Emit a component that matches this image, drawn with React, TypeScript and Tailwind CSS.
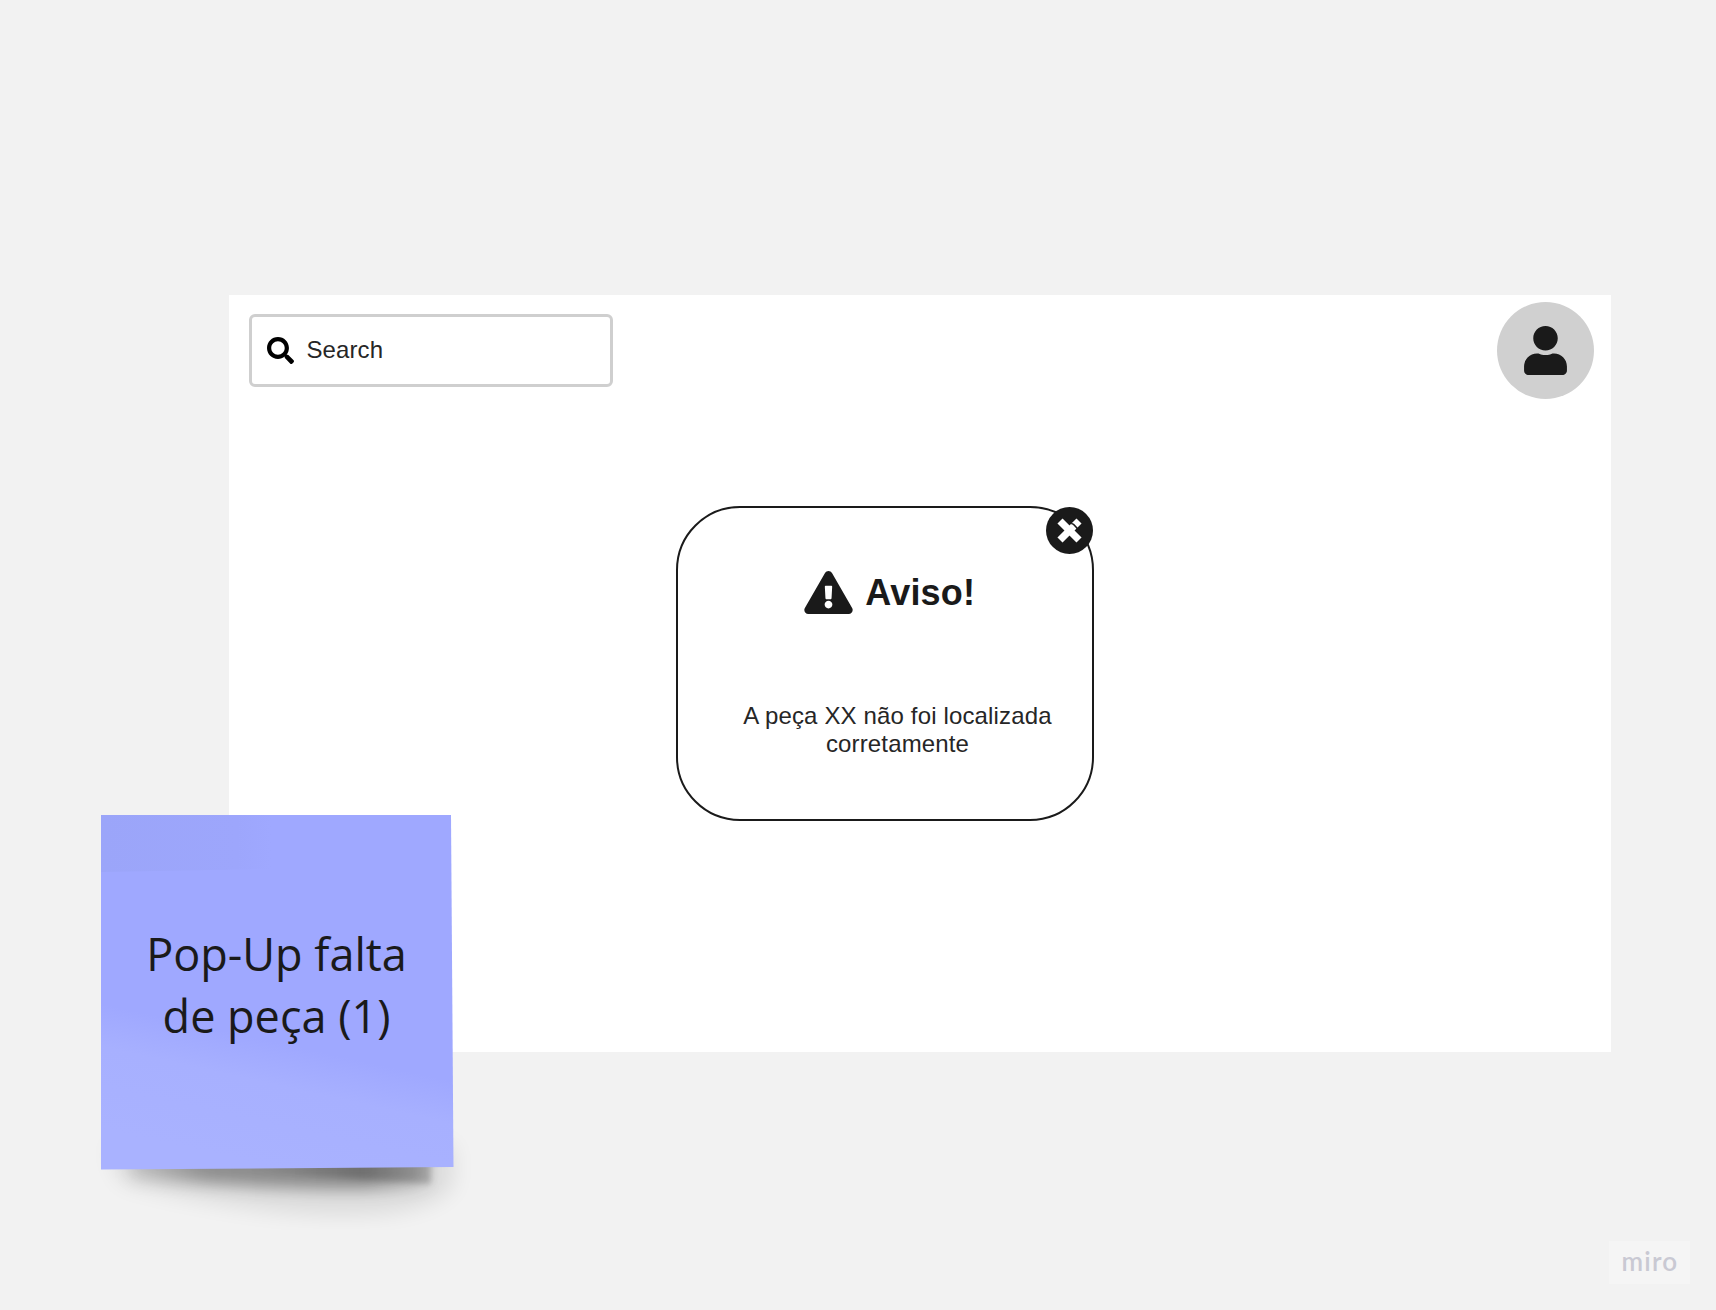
import { FaExclamationTriangle, FaSearch, FaUser } from "react-icons/fa";

function SearchBox() {
  return (
    <div className="mt-[19px] flex h-[73px] w-[364px] items-center rounded-[6px] border-[3px] border-[#cfcfcf] bg-white pl-[15px]">
      <FaSearch className="size-[27px] text-black" />
      <span className="-mt-[2px] ml-[12.5px] text-2xl leading-7 tracking-[0.1px] text-[#262626]">Search</span>
    </div>
  );
}

function Avatar() {
  return (
    <div className="mt-[7px] flex size-[97px] items-center justify-center rounded-full bg-[#d0d0d0]">
      <FaUser className="h-[49px] w-[43px] text-[#1a1a1a]" />
    </div>
  );
}

function CloseButton() {
  return (
    <svg viewBox="0 0 47 47" className="absolute -top-[1px] -right-[1px] size-[47px]">
      <circle cx="23.5" cy="23.5" r="23.5" fill="#1a1a1a" />
      <g stroke="#fff" strokeWidth="7.2">
        <path d="M14 14L33 33" />
        <path d="M14 33L33 14" />
      </g>
      <path d="M25.2 16.4L27.6 17.4L31.2 21.2L31 22.8" fill="none" stroke="#1a1a1a" strokeWidth="1.5" />
    </svg>
  );
}

function Dialog() {
  return (
    <div className="relative flex h-[315px] w-[418px] flex-col items-center rounded-[64px] border-2 border-[#1a1a1a] bg-white text-[#1a1a1a]">
      <CloseButton />
      <div className="mt-[62px] flex h-[44px] items-center pl-[9px]">
        <FaExclamationTriangle className="h-[43px] w-[49px]" />
        <h1 className="mt-[2px] ml-[12.5px] text-[36px] leading-[44px] font-bold tracking-[0.2px]">Aviso!</h1>
      </div>
      <p className="mt-[88px] ml-[25px] w-[330px] text-center text-2xl leading-7 tracking-[0.15px] text-[#262626]">
        A peça XX não foi localizada corretamente
      </p>
    </div>
  );
}

function StickyNote() {
  return (
    <div className="absolute top-[815px] left-[101px] flex h-[355px] w-[351px] items-center justify-center">
      <svg viewBox="0 0 393 435" className="absolute -top-[20px] -left-[20px] h-[435px] w-[393px] max-w-none">
        <defs>
          <linearGradient id="paper" gradientUnits="userSpaceOnUse" x1="222" y1="236" x2="192" y2="372">
            <stop offset="0" stopColor="#9fa8ff" />
            <stop offset="0.12" stopColor="#9fa8ff" />
            <stop offset="0.42" stopColor="#a7b0ff" />
            <stop offset="1" stopColor="#a9b2ff" />
          </linearGradient>
          <linearGradient id="shade" x1="0" y1="0" x2="1" y2="0">
            <stop offset="0" stopColor="#9ba5f9" />
            <stop offset="0.8" stopColor="#9da6fc" />
            <stop offset="1" stopColor="#9fa8ff" />
          </linearGradient>
          <linearGradient id="lift" x1="0" y1="0" x2="1" y2="0">
            <stop offset="0" stopColor="#000" stopOpacity="0.12" />
            <stop offset="0.25" stopColor="#000" stopOpacity="0.35" />
            <stop offset="0.8" stopColor="#000" stopOpacity="0.38" />
            <stop offset="1" stopColor="#000" stopOpacity="0.15" />
          </linearGradient>
          <linearGradient id="curl" x1="0" y1="0" x2="1" y2="0">
            <stop offset="0" stopColor="#000" stopOpacity="0" />
            <stop offset="0.6" stopColor="#000" stopOpacity="0.18" />
            <stop offset="1" stopColor="#000" stopOpacity="0.2" />
          </linearGradient>
          <filter id="near" x="-20%" y="-50%" width="140%" height="200%">
            <feGaussianBlur stdDeviation="8" />
          </filter>
          <filter id="far" x="-20%" y="-50%" width="140%" height="200%">
            <feGaussianBlur stdDeviation="11" />
          </filter>
          <filter id="edge" x="-20%" y="-50%" width="140%" height="200%">
            <feGaussianBlur stdDeviation="3" />
          </filter>
        </defs>
        <path d="M28 350H372V390C340 434 190 426 40 386Z" fill="#000" opacity="0.09" filter="url(#far)" />
        <path d="M50 350H345V390Q260 400 50 383Z" fill="url(#lift)" filter="url(#near)" />
        <path d="M170 365H350V389Q290 386 170 376Z" fill="url(#curl)" filter="url(#edge)" />
        <path d="M20 20H370L372.5 372L20 374.5Z" fill="url(#paper)" />
        <path d="M20 20H190V74L20 77Z" fill="url(#shade)" />
      </svg>
      <p className="relative mt-[-15px] w-[290px] text-center font-['Open_Sans',sans-serif] text-[45px] leading-[62px] font-normal text-[#1a1a1a]">
        Pop-Up falta de peça (1)
      </p>
    </div>
  );
}

export default function App() {
  return (
    <main className="relative h-[1310px] w-[1716px] overflow-hidden bg-[#f2f2f2] pt-[295px] pl-[229px] font-['Liberation_Sans',Arial,sans-serif]">
      <section className="flex h-[757px] w-[1382px] flex-col bg-white">
        <header className="flex h-[211px] items-start justify-between pr-[17px] pl-[20px]">
          <SearchBox />
          <Avatar />
        </header>
        <div className="pl-[447px]">
          <Dialog />
        </div>
      </section>
      <StickyNote />
      <div className="absolute top-[1241px] left-[1609px] flex h-[43px] w-[81px] items-center justify-center bg-[#f5f5f5] font-[Lato,sans-serif] text-[26px] leading-none font-semibold tracking-[1.2px] text-[#c9c9d3]">
        <span className="-mt-[4px] ml-[1px]">miro</span>
      </div>
    </main>
  );
}
